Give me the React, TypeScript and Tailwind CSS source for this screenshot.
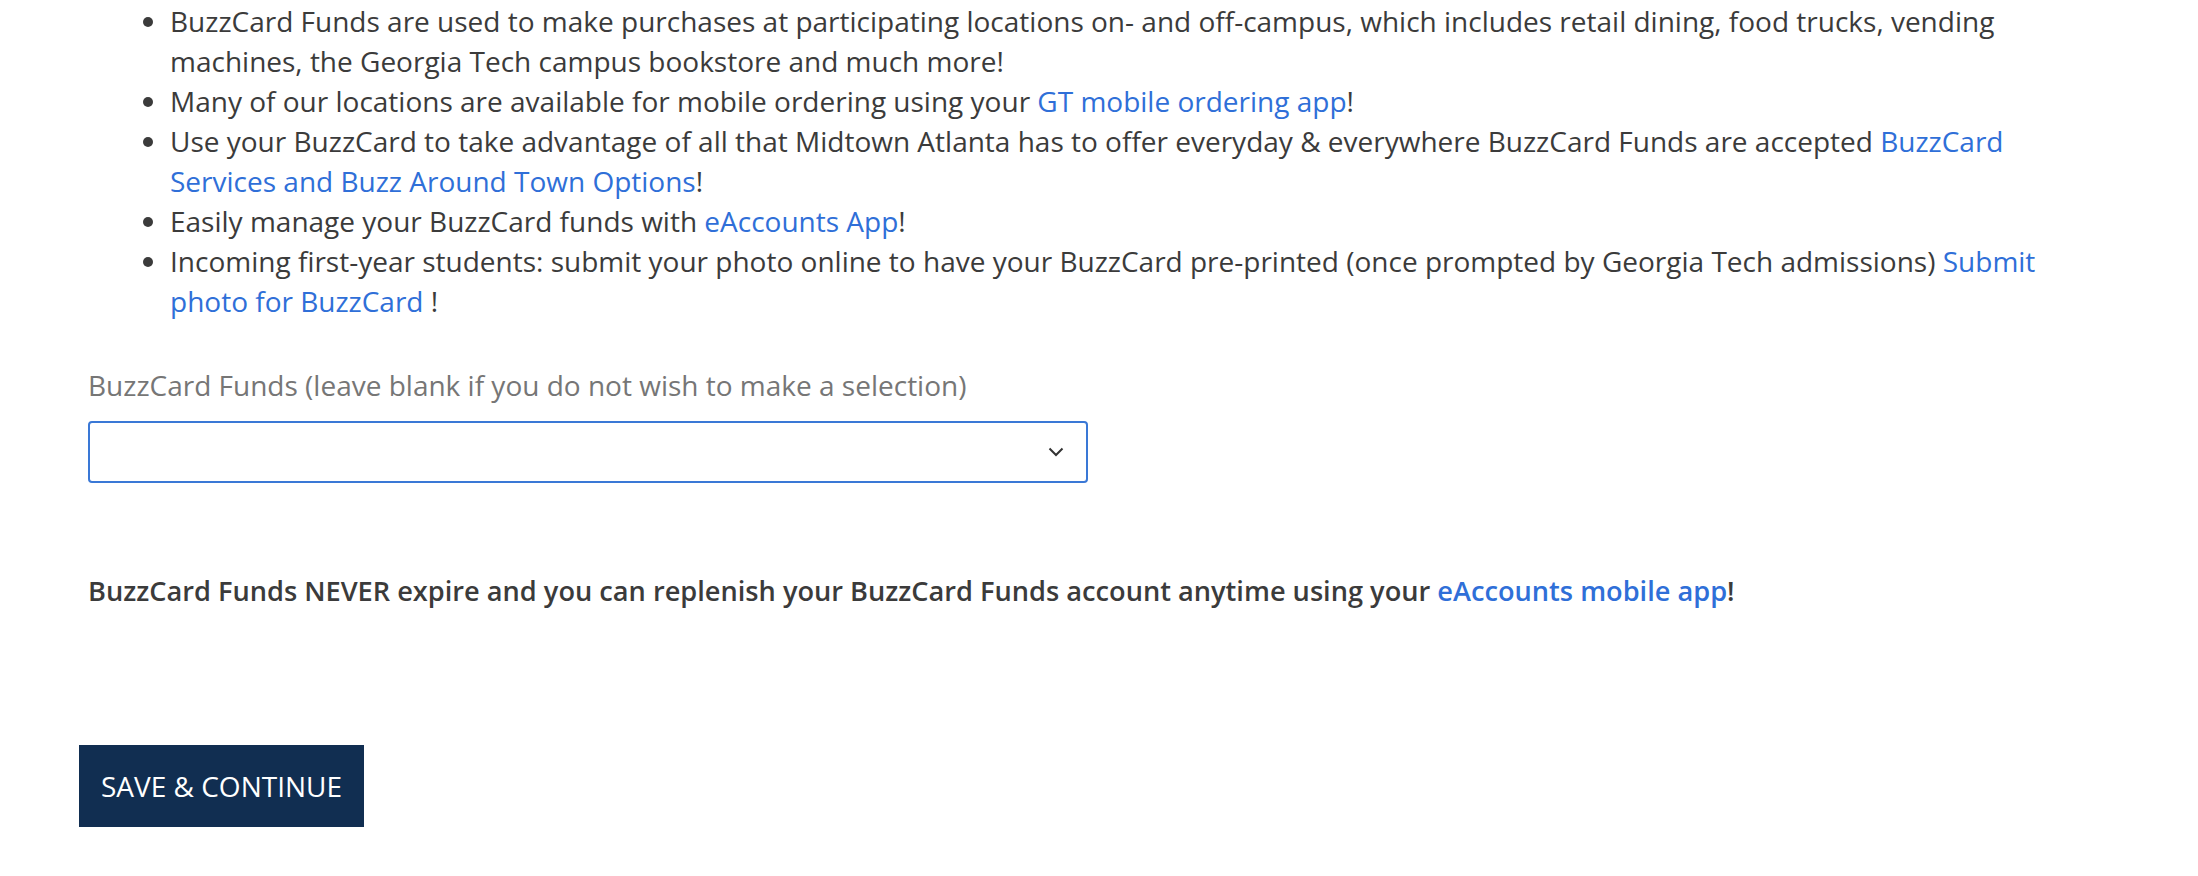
const FONT = "font-['Open_Sans',sans-serif]";

function A({ children }: { children: React.ReactNode }) {
  return (
    <a href="#" className="text-[#2f6fd8] no-underline">
      {children}
    </a>
  );
}

const items = [
  <>
    BuzzCard Funds are used to make purchases at participating locations on- and off-campus, which includes retail
    dining, food trucks, vending machines, the Georgia Tech campus bookstore and much more!
  </>,
  <>
    Many of our locations are available for mobile ordering using your <A>GT mobile ordering app</A>!
  </>,
  <>
    Use your BuzzCard to take advantage of all that Midtown Atlanta has to offer everyday &amp; everywhere BuzzCard
    Funds are accepted <A>BuzzCard Services and Buzz Around Town Options</A>!
  </>,
  <>
    Easily manage your BuzzCard funds with <A>eAccounts App</A>!
  </>,
  <>
    Incoming first-year students: submit your photo online to have your BuzzCard pre-printed (once prompted by Georgia
    Tech admissions) <A>Submit photo for BuzzCard</A> !
  </>,
];

export default function App() {
  return (
    <div className={`${FONT} min-h-[876px] bg-white px-[88px] pt-[1px] text-[28px] leading-[40px] text-[#3b3b3b]`}>
      <ul className="list-disc pl-[82px] pr-[4px]">
        {items.map((item, i) => (
          <li key={i}>{item}</li>
        ))}
      </ul>

      <label className="mt-[44px] mb-[16px] block text-[#767676]">
        BuzzCard Funds (leave blank if you do not wish to make a selection)
      </label>
      <div className="flex h-[62px] w-[1000px] items-center justify-end rounded-[4px] border-2 border-[#3a78d6] pr-[22px]">
        <svg width="16" height="10" viewBox="0 0 16 10" fill="none">
          <path d="M1.5 1.5L8 8L14.5 1.5" stroke="#333" strokeWidth="2" />
        </svg>
      </div>

      <p className="mt-[88px] text-[27.2px] font-semibold text-[#3b3b3b]">
        BuzzCard Funds NEVER expire and you can replenish your BuzzCard Funds account anytime using your{' '}
        <A>eAccounts mobile app</A>!
      </p>

      <button className="-ml-[9px] mt-[134px] flex h-[82px] w-[285px] items-center justify-center bg-[#112e51] text-[28px] text-white">
        SAVE &amp; CONTINUE
      </button>
    </div>
  );
}
